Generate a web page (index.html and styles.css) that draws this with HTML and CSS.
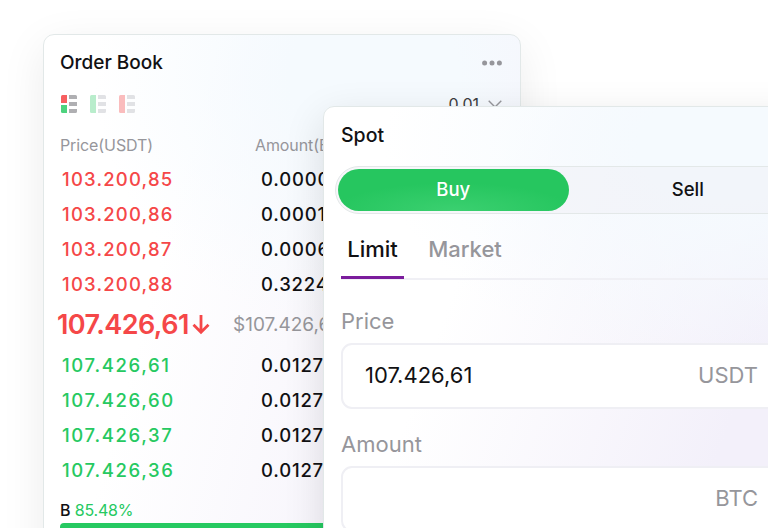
FILE: index.html
```html
<!DOCTYPE html>
<html>
  <head>
    <title>Spot Trading</title>
    <meta charset="UTF-8">
    <meta name="viewport" content="width=device-width, initial-scale=1.0">
    <link rel="stylesheet" href="styles.css">
  </head>

<body>

  <!--Order book-->
  <section class="card order-book">
    <header class="book-header">
      <h2 class="title">Order Book</h2>
      <svg class="dots" width="20" height="6" viewBox="0 0 20 6" fill="#96969b">
        <circle cx="2.6" cy="3" r="2.5"/><circle cx="10" cy="3" r="2.5"/><circle cx="17.4" cy="3" r="2.5"/>
      </svg>
    </header>

    <div class="book-tools">
      <div class="views">
        <svg width="16" height="18" viewBox="0 0 16 18">
          <path d="M1.5 0H6v8H0V1.5Q0 0 1.5 0Z" fill="#f75f60"/>
          <path d="M0 10h6v8H1.5Q0 18 0 16.5Z" fill="#4dd37e"/>
          <path d="M8 0h6.5Q16 0 16 1.5V4H8ZM8 7h8v4H8ZM8 14h8v2.5q0 1.5-1.5 1.5H8Z" fill="#afafb2"/>
        </svg>
        <svg width="16" height="18" viewBox="0 0 16 18">
          <path d="M1.5 0H6v18H1.5Q0 18 0 16.5V1.5Q0 0 1.5 0Z" fill="#b9edcc"/>
          <path d="M8 0h6.5Q16 0 16 1.5V4H8ZM8 7h8v4H8ZM8 14h8v2.5q0 1.5-1.5 1.5H8Z" fill="#e1e2e5"/>
        </svg>
        <svg width="16" height="18" viewBox="0 0 16 18">
          <path d="M1.5 0H6v18H1.5Q0 18 0 16.5V1.5Q0 0 1.5 0Z" fill="#fabcbd"/>
          <path d="M8 0h6.5Q16 0 16 1.5V4H8ZM8 7h8v4H8ZM8 14h8v2.5q0 1.5-1.5 1.5H8Z" fill="#e1e2e5"/>
        </svg>
      </div>
      <div class="precision">
        <span>0.01</span>
        <svg width="14" height="8" viewBox="0 0 14 8" fill="none" stroke="#96969b" stroke-width="1.4"><path d="M.7.8 7 7 13.3.8"/></svg>
      </div>
    </div>

    <div class="row head"><span>Price(USDT)</span><span class="amount">Amount(BTC)</span></div>

    <!--Asks-->
    <div class="row ask"><span>103.200,85</span><span class="amount">0.00009</span></div>
    <div class="row ask"><span>103.200,86</span><span class="amount">0.00019</span></div>
    <div class="row ask"><span>103.200,87</span><span class="amount">0.00069</span></div>
    <div class="row ask"><span>103.200,88</span><span class="amount">0.32249</span></div>

    <!--Last price-->
    <div class="last">
      <span class="last-price">107.426,61</span>
      <svg width="18" height="20" viewBox="0 0 18 20" fill="none" stroke="#f54748" stroke-width="2.8"><path d="M9 0v17M1.5 9.8 9 17.3 16.5 9.8"/></svg>
      <span class="last-usd">$107.426,61</span>
    </div>

    <!--Bids-->
    <div class="row bid"><span>107.426,61</span><span class="amount">0.01279</span></div>
    <div class="row bid"><span>107.426,60</span><span class="amount">0.01279</span></div>
    <div class="row bid"><span>107.426,37</span><span class="amount">0.01279</span></div>
    <div class="row bid"><span>107.426,36</span><span class="amount">0.01279</span></div>

    <div class="ratio">B <span>85.48%</span></div>
    <div class="ratio-bar"></div>
  </section>

  <!--Spot form-->
  <section class="card spot">
    <h2 class="title">Spot</h2>
    <div class="switch">
      <button class="side buy">Buy</button>
      <button class="side sell">Sell</button>
    </div>
    <nav class="tabs">
      <a class="tab active">Limit</a>
      <a class="tab market">Market</a>
    </nav>
    <label class="label price-label">Price</label>
    <div class="field"><span class="value">107.426,61</span><span class="unit">USDT</span></div>
    <label class="label amount-label">Amount</label>
    <div class="field"><span></span><span class="unit">BTC</span></div>
  </section>

</body>
</html>
```
FILE: styles.css
```css
html, body {
  margin: 0;
  padding: 0;
  height: 528px;
  overflow: hidden;
  background-color: #fff;
  font-family: Inter, "Liberation Sans", sans-serif;
  color: #111113;
}

body {
  position: relative;
}

* {
  box-sizing: border-box;
}

/* Cards overlap each other */
.card {
  position: absolute;
  border: 1.5px solid #e2e8e8;
  border-radius: 11px;
}

.title {
  margin: 0;
  font-size: 19px;
  font-weight: 500;
  line-height: 24px;
}

.order-book {
  left: 43px;
  top: 34px;
  width: 478px;
  height: 560px;
  padding: 16px 18px 0 16px;
  background: radial-gradient(ellipse 280px 260px at 330px 40px, #f5fafe 30%, rgba(245, 250, 254, 0)), linear-gradient(105deg, #fff 28%, #f3f0fa 88%);
  box-shadow: 0 12px 45px rgba(0, 0, 0, 0.08);
}

.book-header {
  display: flex;
  justify-content: space-between;
  align-items: center;
}

.book-tools {
  display: flex;
  justify-content: space-between;
  align-items: center;
  height: 20px;
  margin-top: 19px;
}

.views {
  display: flex;
  gap: 13px;
  padding-left: 1px;
}

.precision {
  display: flex;
  align-items: center;
  gap: 9px;
  font-size: 16px;
  color: #3c3c40;
}

.row {
  display: grid;
  grid-template-columns: 199px 1fr;
  height: 35.1px;
  line-height: 35px;
  padding-left: 2px;
  font-size: 18.5px;
  font-weight: 500;
  letter-spacing: 1.2px;
  white-space: nowrap;
}

.row.head {
  grid-template-columns: 195px 1fr;
  height: 34px;
  margin-top: 14px;
  padding-left: 0;
  font-size: 16px;
  font-weight: 400;
  letter-spacing: -0.1px;
  color: #96969b;
}

.ask {
  color: #f54748;
}

.bid {
  letter-spacing: 1.65px;
  color: #26c961;
}

.row .amount {
  letter-spacing: 0.8px;
  color: #111113;
}

.row.head .amount {
  letter-spacing: -0.1px;
  color: #96969b;
}

.last {
  display: flex;
  align-items: center;
  height: 45px;
  margin: 0 0 0.6px -3px;
}

.last-price {
  width: 135px;
  font-size: 27px;
  font-weight: 600;
  letter-spacing: -0.55px;
  color: #f54748;
}

.last-usd {
  margin-left: 23px;
  font-size: 19px;
  color: #96969b;
}

.ratio {
  height: 31px;
  padding-top: 10px;
  font-size: 16px;
  line-height: 24px;
  font-weight: 500;
}

.ratio span {
  font-weight: 400;
  letter-spacing: -0.2px;
  color: #26c961;
}

.ratio-bar {
  height: 8px;
  margin-top: 4px;
  border-radius: 4px;
  background-color: #26c961;
}

/* Spot card runs past the right edge */
.spot {
  left: 323px;
  top: 106px;
  width: 480px;
  height: 480px;
  padding: 16px 0 0 17px;
  background: radial-gradient(ellipse 340px 220px at 400px 40px, #f5fafe 25%, rgba(245, 250, 254, 0)), linear-gradient(110deg, #fff 30%, #f3f0fa 80%);
  box-shadow: 0 12px 40px rgba(0, 0, 20, 0.12);
}

.spot .title {
  font-size: 19.5px;
}

.switch {
  display: flex;
  width: 475px;
  height: 48px;
  margin: 19px 0 0 -6px;
  padding: 2px;
  border: 1px solid #e3e8e8;
  border-radius: 24px;
  background-color: rgba(239, 239, 245, 0.5);
}

.side {
  padding: 0;
  border: none;
  background: none;
  font-family: inherit;
  font-size: 18.5px;
  font-weight: 500;
  line-height: 38px;
  color: #111113;
}

.buy {
  width: 232px;
  padding-bottom: 2px;
  border-radius: 21px;
  background: radial-gradient(ellipse 120px 28px at 50% 100%, #3bd070, #26c65f);
  color: #fff;
}

.sell {
  width: 240px;
  padding-bottom: 2px;
}

.tabs {
  display: flex;
  height: 66px;
  border-bottom: 2px solid #f0f0f5;
}

.tab {
  width: 63px;
  height: 65px;
  font-size: 22px;
  font-weight: 500;
  line-height: 70px;
  text-align: center;
}

.tab.active {
  border-bottom: 3px solid #7b1c9c;
}

.tab.market {
  width: 122px;
  color: #96969b;
}

.label {
  display: block;
  font-size: 22px;
  line-height: 30px;
  color: #96969b;
}

.price-label {
  margin-top: 26px;
}

.amount-label {
  margin-top: 20px;
}

.field {
  display: flex;
  justify-content: space-between;
  align-items: center;
  width: 450px;
  height: 66px;
  margin-top: 7px;
  padding: 0 31px 2px 22px;
  border: 2px solid #efeff4;
  border-radius: 11px;
  background-color: #fff;
  font-size: 22px;
}

.unit {
  color: #96969b;
}
```
